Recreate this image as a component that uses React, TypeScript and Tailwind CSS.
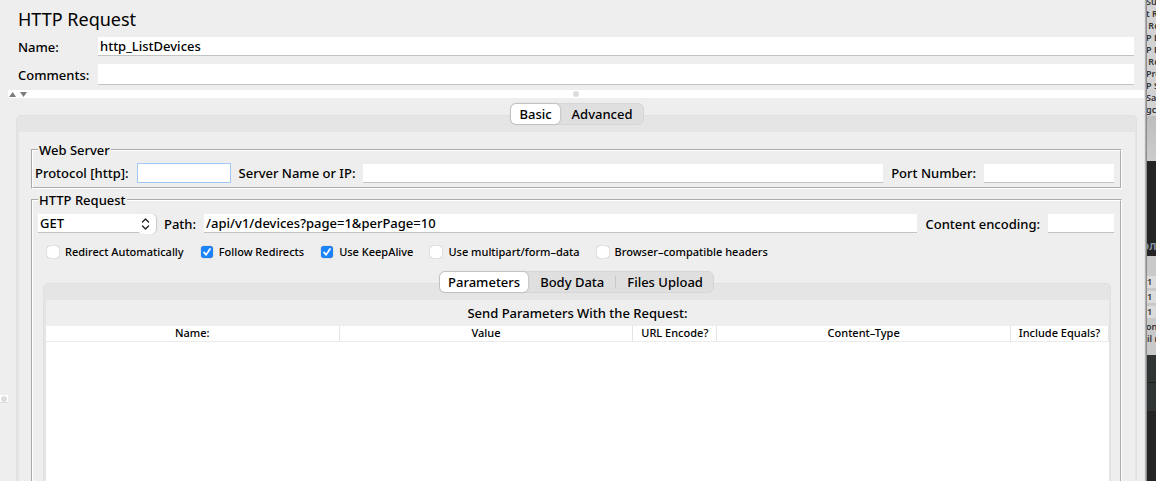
import { useState } from "react";
import type { ReactNode } from "react";

const field =
  "h-[19px] min-w-0 border-b border-[#c3c3c3] bg-white px-[2px] text-[13px] leading-[18px] font-medium outline-none";

function Tabs({ items, label }: { items: string[]; label: string }) {
  const [active, setActive] = useState(0);
  return (
    <div
      role="tablist"
      aria-label={label}
      className="relative z-10 -mb-[10px] flex h-[22px] self-center rounded-md border border-[#d6d6d6] bg-[#dfdfdf]"
    >
      {items.map((item, i) => (
        <div key={item} className="flex items-center">
          {i > 0 && (
            <span className={i - 1 === active || i === active ? "h-3 w-[2px]" : "mx-px h-3 w-px bg-[#c8c8c8]"} />
          )}
          <button
            type="button"
            role="tab"
            aria-selected={i === active}
            onClick={() => setActive(i)}
            className={
              i === active
                ? "h-5 rounded-[5px] bg-white px-2 text-[13px] leading-[18px] font-medium shadow-[0_0_2px_rgba(0,0,0,0.35)]"
                : "h-5 px-[10px] text-[13px] leading-[18px] font-medium"
            }
          >
            {item}
          </button>
        </div>
      ))}
    </div>
  );
}

function Check({ label, checked = false }: { label: string; checked?: boolean }) {
  const [on, setOn] = useState(checked);
  return (
    <label className="flex items-center gap-[6px] text-[11px] leading-4">
      <span className="relative flex size-3">
        <input
          type="checkbox"
          checked={on}
          onChange={(e) => setOn(e.target.checked)}
          className="size-3 appearance-none rounded-[3px] bg-white shadow-[0_0_1px_rgba(0,0,0,0.5)] checked:bg-[#1a82fb]"
        />
        {on && (
          <svg viewBox="0 0 12 12" className="pointer-events-none absolute inset-0 size-3" aria-hidden="true">
            <path
              d="M3 6.4 5.1 8.9 9 3"
              fill="none"
              stroke="#fff"
              strokeWidth="1.7"
              strokeLinecap="round"
              strokeLinejoin="round"
            />
          </svg>
        )}
      </span>
      {label}
    </label>
  );
}

function TabPanel({ children, className }: { children: ReactNode; className: string }) {
  return (
    <div
      className={`flex flex-1 flex-col rounded-t-[5px] border-x border-t border-[#e0e0e0] bg-[#e5e5e5] pt-4 pr-px pl-[2px] ${className}`}
    >
      <div className="flex flex-1 flex-col bg-[#eeeeee]">{children}</div>
    </div>
  );
}

function ParameterTable() {
  const columns = ["Name:", "Value", "URL Encode?", "Content–Type", "Include Equals?"];
  return (
    <div className="flex-1 bg-white">
      <table className="w-full table-fixed border-collapse">
        <colgroup>
          <col />
          <col />
          <col className="w-[84px]" />
          <col />
          <col className="w-[98px]" />
        </colgroup>
        <thead>
          <tr className="border-b border-[#ececec]">
            {columns.map((column) => (
              <th key={column} className="p-0 text-center text-[11px] leading-[14px] font-medium">
                <div className="border-r border-[#e4e4e4] pb-px">{column}</div>
              </th>
            ))}
          </tr>
        </thead>
        <tbody />
      </table>
    </div>
  );
}

function BackgroundWindow() {
  const names = ["Su", "t R", " Re", "P E", "P R", " Re", "Pro", "P S", "Sa", "gc"];
  return (
    <aside className="z-10 flex w-[10px] shrink-0 flex-col overflow-hidden border-l border-[#8c8c8c] bg-[#242424] text-[9px] font-semibold whitespace-pre text-[#333] shadow-[-1px_0_1px_rgba(0,0,0,0.25)]">
      <div className="h-[116px] shrink-0 overflow-hidden bg-[#d3d3d3]">
        <div className="-mt-1 -ml-px">
          {names.map((name, i) => (
            <div key={i} className="h-3 leading-3">
              {name}
            </div>
          ))}
        </div>
      </div>
      <div className="h-[45px] shrink-0 bg-gradient-to-b from-[#bdbdbd] to-[#cccccc]" />
      <div className="-ml-1 flex h-[95px] shrink-0 items-end text-xs leading-5 text-[#8595a8]">эл</div>
      <div className="h-[99px] shrink-0 bg-[#c9c9c9] pt-5">
        {["1", "1", "1"].map((value, i) => (
          <div key={i} className="mb-[3px] h-3 bg-[#dcdcdc] leading-3">
            {value}
          </div>
        ))}
        <div className="-ml-px leading-3">on</div>
        <div className="leading-3">il r</div>
      </div>
      <div className="h-7 shrink-0 border-b border-[#202222] bg-[#303434]" />
      <div className="h-7 shrink-0 bg-[#303434]" />
    </aside>
  );
}

export default function App() {
  return (
    <div className="flex h-screen overflow-hidden bg-[#eeeeee] font-['Noto_Sans','Lucida_Grande',sans-serif] text-[13px] leading-[18px] font-medium text-black">
      <div className="relative w-2 shrink-0">
        <div className="absolute top-[395px] left-0 flex size-2 items-center justify-center border-b border-[#dddddd] bg-white">
          <span className="size-[6px] rounded-full bg-[#dddddd]" />
        </div>
      </div>

      <main className="flex min-w-0 flex-1 flex-col">
        <header className="flex flex-col pr-3 pl-[10px]">
          <h1 className="mt-[7px] text-lg leading-6 font-normal">HTTP Request</h1>
          <div className="mt-[6px] flex items-center">
            <label htmlFor="name" className="w-20 shrink-0">
              Name:
            </label>
            <input id="name" defaultValue="http_ListDevices" className={`${field} flex-1`} />
          </div>
          <div className="mt-2 flex items-center">
            <label htmlFor="comments" className="w-20 shrink-0">
              Comments:
            </label>
            <input id="comments" className={`${field} h-[21px] flex-1`} />
          </div>
        </header>

        <div className="mt-[5px] mr-[2px] flex h-2 shrink-0 items-center bg-white">
          <svg viewBox="0 0 20 8" className="h-2 w-5" aria-hidden="true">
            <path d="M1 7 4.800 2 8 7Z" fill="#7d7d7d" />
            <path d="M12 2h7l-3.500 5Z" fill="#7d7d7d" />
          </svg>
          <div className="flex flex-1 justify-center pr-5">
            <span className="size-[6px] rounded-full bg-[#dddddd]" />
          </div>
        </div>

        <div className="mt-[5px] flex flex-1 flex-col">
          <Tabs label="Request settings" items={["Basic", "Advanced"]} />
          <TabPanel className="mr-[9px] ml-2">
            <div className="flex flex-1 flex-col pt-[9px] pr-[13px] pl-3">
              <fieldset className="mb-[2px] border-2 border-white px-[2px] pb-1 [border-style:groove]">
                <legend className="ml-[3px] px-px">Web Server</legend>
                <div className="flex items-center gap-2 pt-1 pr-1">
                  <label htmlFor="protocol">Protocol [http]:</label>
                  <input
                    id="protocol"
                    className="h-5 w-[94px] border border-[#9fc8f5] bg-white px-[2px] outline-none"
                  />
                  <label htmlFor="server">Server Name or IP:</label>
                  <input id="server" className={`${field} flex-1`} />
                  <label htmlFor="port">Port Number:</label>
                  <input id="port" className={`${field} w-[130px]`} />
                </div>
              </fieldset>

              <fieldset className="flex flex-1 flex-col border-2 border-b-0 border-white px-[2px] [border-style:groove]">
                <legend className="ml-[3px] px-px">HTTP Request</legend>
                <div className="flex items-center gap-2 pt-[5px] pr-1 pl-[3px]">
                  <div className="relative flex w-[118px] items-center">
                    <select
                      aria-label="Method"
                      defaultValue="GET"
                      className={`${field} w-full appearance-none rounded-r-[5px]`}
                    >
                      <option>GET</option>
                      <option>POST</option>
                      <option>PUT</option>
                      <option>DELETE</option>
                    </select>
                    <svg
                      viewBox="0 0 18 20"
                      className="pointer-events-none absolute right-0 h-5 w-[18px] rounded-[5px] bg-white shadow-[1px_0_1px_rgba(0,0,0,0.15)]"
                      aria-hidden="true"
                    >
                      <path
                        d="M4.500 8 7.500 5 10.500 8M4.500 12 7.500 15 10.500 12"
                        fill="none"
                        stroke="#222"
                        strokeWidth="1.400"
                        strokeLinecap="round"
                        strokeLinejoin="round"
                      />
                    </svg>
                  </div>
                  <label htmlFor="path">Path:</label>
                  <input
                    id="path"
                    defaultValue="/api/v1/devices?page=1&perPage=10"
                    className={`${field} flex-1`}
                  />
                  <label htmlFor="encoding">Content encoding:</label>
                  <input id="encoding" className={`${field} w-[66px]`} />
                </div>

                <div className="mt-[11px] flex gap-[17px] pl-3">
                  <Check label="Redirect Automatically" />
                  <Check label="Follow Redirects" checked />
                  <Check label="Use KeepAlive" checked />
                  <Check label="Use multipart/form–data" />
                  <Check label="Browser–compatible headers" />
                </div>

                <div className="mt-[11px] flex flex-1 flex-col">
                  <Tabs label="Request content" items={["Parameters", "Body Data", "Files Upload"]} />
                  <TabPanel className="mr-[7px] ml-2">
                    <h2 className="pt-1 pb-1 text-center">Send Parameters With the Request:</h2>
                    <ParameterTable />
                  </TabPanel>
                </div>
              </fieldset>
            </div>
          </TabPanel>
        </div>
      </main>

      <BackgroundWindow />
    </div>
  );
}
